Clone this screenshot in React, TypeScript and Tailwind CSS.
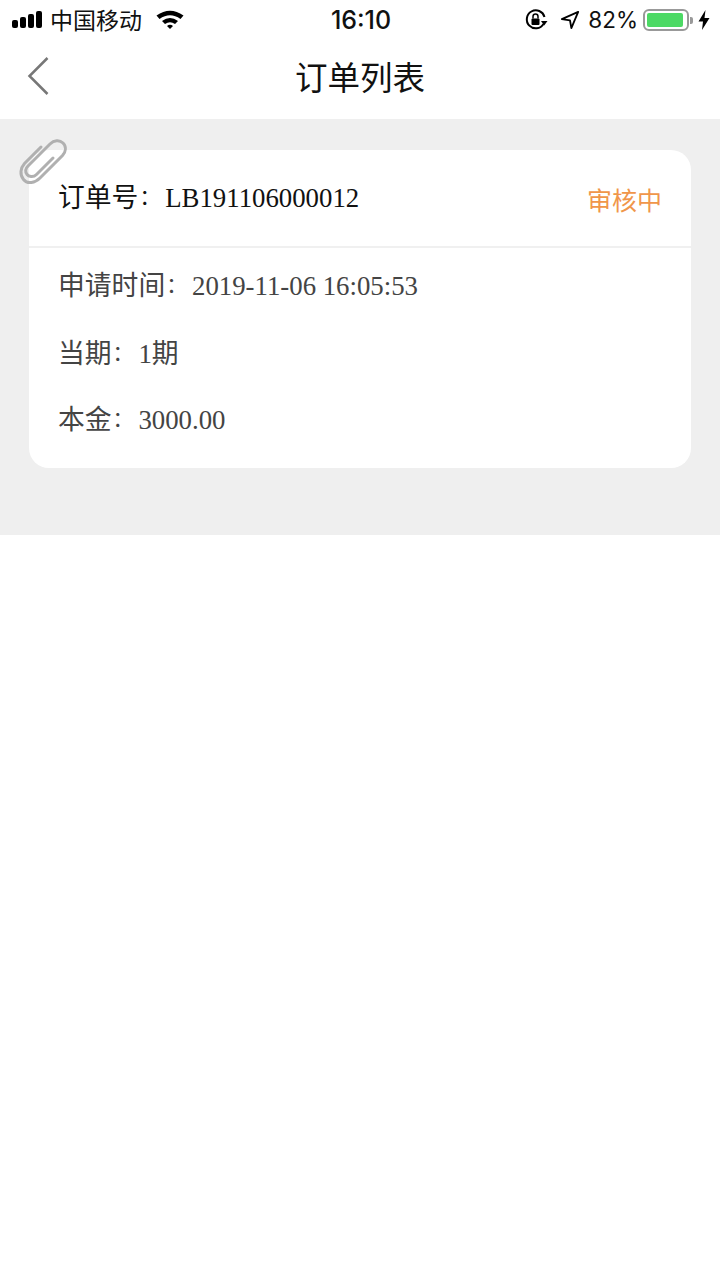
const CJK = "font-['PingFang_SC','Noto_Sans_CJK_SC',sans-serif]";
const SERIF = "font-['Liberation_Serif','Noto_Sans_CJK_SC',serif]";

// full-width colon: the reference's sits smaller and higher than the SC glyph does at text size
function Colon() {
  return <span className="inline-block w-[26.800px] pl-[1px] text-[21px] -translate-y-[3px]">：</span>;
}

function StatusBar() {
  return (
    <div className="h-10 flex items-center pl-3 pr-[10px] text-[#111]">
      <div className="flex-1 flex items-center">
        <div className="flex items-end gap-[2px] h-[16px]">
          <span className="w-[6px] h-[8px] rounded-[2px] bg-black" />
          <span className="w-[6px] h-[11px] rounded-[2px] bg-black" />
          <span className="w-[6px] h-[14px] rounded-[2px] bg-black" />
          <span className="w-[6px] h-[17px] rounded-[2px] bg-black" />
        </div>
        <span className={`${CJK} ml-[8px] text-[23px] leading-none -translate-y-[1px]`}>中国移动</span>
        <svg className="ml-[13px] -translate-y-[1px]" width="30" height="20" viewBox="0 0 30 20">
          <path d="M1.500 6.500 Q15 -3 28.500 6.500 L25.500 10 Q15 2.500 4.500 10Z" fill="#000" />
          <path d="M7 12 Q15 6 23 12 L20 15 Q15 11.500 10 15Z" fill="#000" />
          <path d="M12 17 Q15 14.500 18 17 L15 20Z" fill="#000" />
        </svg>
      </div>
      <span className="font-['Inter',sans-serif] text-[25px] font-medium leading-none">16:10</span>
      <div className="flex-1 flex items-center justify-end">
        <svg width="24" height="24" viewBox="0 0 24 24" fill="none">
          <path d="M19.500 16 A9 9 0 1 1 20.500 9" stroke="#000" strokeWidth="2" />
          <path d="M17 13 L23.500 13 L20.200 17.500Z" fill="#000" />
          <rect x="7.500" y="10.500" width="8" height="6.500" rx="1" fill="#000" />
          <path d="M9 10.500 V8.500 a2.500 2.500 0 0 1 5 0 V10.500" stroke="#000" strokeWidth="1.500" />
        </svg>
        <svg className="ml-[12px]" width="20" height="20" viewBox="0 0 22 22" fill="none">
          <path d="M20 2 L2 10 L11 11.500 L12.500 20Z" stroke="#000" strokeWidth="2" strokeLinejoin="round" />
        </svg>
        <span className="ml-[8px] font-['Inter',sans-serif] text-[22.500px] leading-none">82%</span>
        <div className="ml-[5px] w-[46px] h-[22px] rounded-[6px] border-2 border-[#999] p-[2px]">
          <div className="w-[36px] h-full rounded-[2px] bg-[#4cd964]" />
        </div>
        <span className="ml-[1px] w-[3px] h-[7px] rounded-r-[2px] bg-[#999]" />
        <svg className="ml-[5px]" width="12" height="20" viewBox="0 0 12 20">
          <path d="M7.500 0 L0.500 11.500 H5 L4 20 L11.500 8 H6.500Z" fill="#000" />
        </svg>
      </div>
    </div>
  );
}

function NavBar() {
  return (
    <div className="relative h-[79px] flex items-center justify-center">
      <svg className="absolute left-[27px] top-[16px]" width="22" height="40" viewBox="0 0 22 40" fill="none">
        <path d="M20.500 2 L2.500 20 L20.500 38" stroke="#777" strokeWidth="2.500" />
      </svg>
      <h1 className={`${CJK} text-[32.500px] leading-none font-normal text-[#111] -translate-y-[3px]`}>订单列表</h1>
    </div>
  );
}

function Clip() {
  return (
    <svg className="absolute left-[19px] top-[137px]" width="50" height="50" viewBox="0 0 50 50" fill="none">
      <path
        d="M34 21 L17.500 37.500 C14 41 9.500 39.500 8 37.500 C6 34.500 6.500 31.500 9 29 L31 7 C35 3 40.500 2.500 44 6 C47.500 9.500 47 14.500 43.500 18.500 L21 41 C16 46 8.500 47.500 4.500 42.500 C0.500 37.500 1.500 31 5.500 26.500 L22 10"
        stroke="#b0b0b0"
        strokeWidth="3"
        strokeLinecap="round"
      />
    </svg>
  );
}

export default function App() {
  return (
    <div className="relative w-[720px] h-[1280px] bg-white overflow-hidden">
      <StatusBar />
      <NavBar />
      <main className="bg-[#efefef] h-[416px] pt-[31px] px-[29px]">
        <div className="h-[318px] bg-white rounded-[20px] overflow-hidden">
          <div className="h-[98px] px-[29px] flex items-center justify-between border-b-2 border-[#f0f0f0]">
            <div className={`${SERIF} text-[26.800px] leading-none text-[#111]`}>订单号<Colon />LB191106000012</div>
            <div className={`${CJK} text-[25px] leading-none text-[#f0964a] translate-y-[1px]`}>审核中</div>
          </div>
          <div className={`${SERIF} pl-[29px] pt-[5px] flex flex-col text-[26.800px] text-[#444]`}>
            <div className="h-[67px] flex items-center leading-none"><p>申请时间<Colon />2019-11-06 16:05:53</p></div>
            <div className="h-[67px] flex items-center leading-none translate-y-[1px]"><p>当期<Colon />1期</p></div>
            <div className="h-[67px] flex items-center leading-none"><p>本金<Colon />3000.00</p></div>
          </div>
        </div>
      </main>
      <Clip />
    </div>
  );
}
